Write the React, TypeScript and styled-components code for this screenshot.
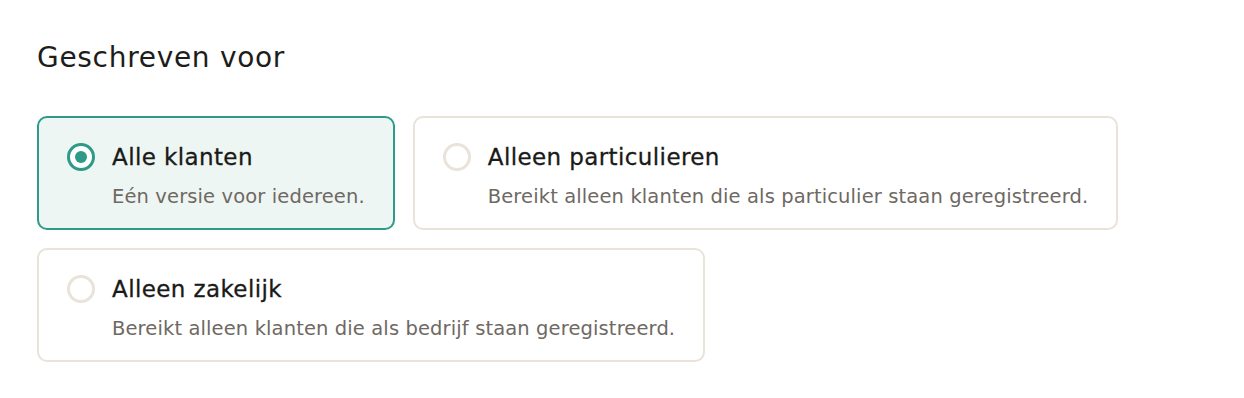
import React, { useState } from 'react'
import styled, { createGlobalStyle } from 'styled-components';

const GlobalStyle = createGlobalStyle`
    body {
        margin: 0;
        background: #ffffff;
        font-family: "DejaVu Sans", "Noto Sans", sans-serif;
    }
`;

const Page = styled.div`
    padding: 36px 37px;
`;

const Title = styled.h2`
    font-size: 28px;
    font-weight: 400;
    color: #1d1d1b;
    margin: 0 0 36px 0;
    line-height: 44px;
    letter-spacing: 0.7px;
`;

const Options = styled.div`
    display: flex;
    flex-wrap: wrap;
    gap: 18px;
    width: 1100px;
`;

const Card = styled.label<{ $active: boolean }>`
    display: flex;
    align-items: flex-start;
    gap: 17px;
    box-sizing: border-box;
    height: 114px;
    padding: 24px 28px 0 28px;
    border-radius: 10px;
    border: 2px solid ${p => (p.$active ? '#2e9a89' : '#e9e3da')};
    background: ${p => (p.$active ? '#eef6f4' : '#ffffff')};
    cursor: pointer;
`;

const Radio = styled.span<{ $active: boolean }>`
    flex: none;
    box-sizing: border-box;
    width: 28px;
    height: 28px;
    margin-top: 1px;
    border-radius: 50%;
    border: 3.5px solid ${p => (p.$active ? '#2e9a89' : '#e9e3da')};
    background: #fff;
    display: flex;
    align-items: center;
    justify-content: center;
    &::after {
        content: '';
        display: ${p => (p.$active ? 'block' : 'none')};
        width: 12px;
        height: 12px;
        border-radius: 50%;
        background: #2e9a89;
    }
`;

const Text = styled.div`
    display: flex;
    flex-direction: column;
    gap: 12px;
`;

const Label = styled.span`
    font-size: 23px;
    line-height: 30px;
    color: #1a1a18;
    letter-spacing: 0.4px;
    -webkit-text-stroke: 0.3px #1a1a18;
`;

const Description = styled.span`
    font-size: 19.5px;
    line-height: 26px;
    color: #6e6963;
    letter-spacing: 0.12px;
`;

const options = [
    { id: 'all', label: 'Alle klanten', description: 'Eén versie voor iedereen.' },
    { id: 'private', label: 'Alleen particulieren', description: 'Bereikt alleen klanten die als particulier staan geregistreerd.' },
    { id: 'business', label: 'Alleen zakelijk', description: 'Bereikt alleen klanten die als bedrijf staan geregistreerd.' },
];

export default function App() {
    const [selected, setSelected] = useState('all');

    return (
        <>
            <GlobalStyle />
            <Page>
                <Title>Geschreven voor</Title>
                <Options>
                    {options.map(option => (
                        <Card key={option.id} $active={selected === option.id} onClick={() => setSelected(option.id)}>
                            <Radio $active={selected === option.id} />
                            <Text>
                                <Label>{option.label}</Label>
                                <Description>{option.description}</Description>
                            </Text>
                        </Card>
                    ))}
                </Options>
            </Page>
        </>
    )
}
